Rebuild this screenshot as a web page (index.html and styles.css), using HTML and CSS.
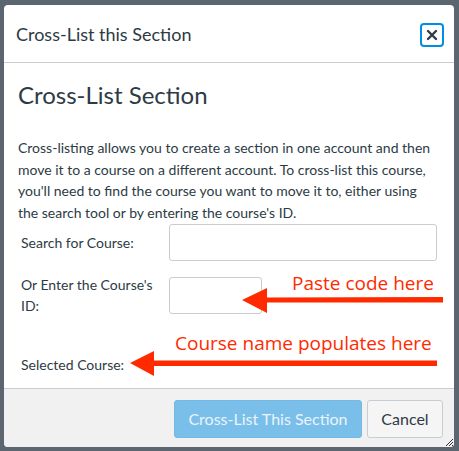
FILE: index.html
```html
<!DOCTYPE html>
<html lang="en">
<head>
  <meta charset="UTF-8">
  <meta name="viewport" content="width=device-width, initial-scale=1.0">
  <title>Cross-List this Section</title>
  <link rel="stylesheet" href="styles.css">
</head>
<body>
  <div class="dialog">
    <!-- Header -->
    <div class="dialog-header">
      <span class="dialog-title">Cross-List this Section</span>
      <button class="close-btn" aria-label="Close">
        <svg width="12" height="12" viewBox="0 0 12 12"><path d="M2 2 L10 10 M10 2 L2 10" stroke="#2d3b45" stroke-width="2.4" stroke-linecap="round"/></svg>
      </button>
    </div>

    <!-- Body -->
    <div class="dialog-body">
      <h2>Cross-List Section</h2>
      <p>Cross-listing allows you to create a section in one account and then move it to a course on a different account. To cross-list this course, you'll need to find the course you want to move it to, either using the search tool or by entering the course's ID.</p>

      <div class="form-row">
        <label for="search">Search for Course:</label>
        <input type="text" id="search" class="input-wide">
      </div>
      <div class="form-row">
        <label for="courseId">Or Enter the Course's ID:</label>
        <input type="text" id="courseId" class="input-small">
      </div>
      <div class="form-row selected">
        <span class="label">Selected Course:</span>
      </div>
    </div>

    <!-- Footer -->
    <div class="dialog-footer">
      <button class="btn-primary">Cross-List This Section</button>
      <button class="btn">Cancel</button>
      <svg class="grip" width="9" height="9" viewBox="0 0 9 9"><path d="M8 1 L1 8 M8 4 L4 8 M8 7 L7 8" stroke="#333" stroke-width="1"/></svg>
    </div>

    <!-- Annotations drawn over the dialog -->
    <div class="note note-paste">Paste code here</div>
    <svg class="arrow arrow-paste" width="202" height="26" viewBox="0 0 202 26"><path d="M0 12 L25 0 L25 9.5 L201 9 L201 14.5 L25 14.5 L25 25 Z" fill="#ff2a00"/></svg>
    <div class="note note-course">Course name populates here</div>
    <svg class="arrow arrow-course" width="308" height="26" viewBox="0 0 308 26"><path d="M0 12 L24 0 L24 9.5 L307 9.5 L307 15 L24 15 L24 25 Z" fill="#ff2a00"/></svg>
  </div>
</body>
</html>
```

FILE: styles.css
```css
body {
  margin: 0;
  padding: 5px 5px 4px 4px;
  background: #5b6670;
  font-family: Lato, "Open Sans", sans-serif;
  color: #2d3b45;
}
.dialog {
  position: relative;
  width: 450px;
  background: #fff;
  border-radius: 4px;
  overflow: hidden;
}
.dialog-header {
  height: 57px;
  display: flex;
  align-items: center;
  justify-content: space-between;
  padding: 0 10px 0 12px;
  border-bottom: 1px solid #c7cdd1;
}
.dialog-title {
  font-size: 18px;
}
.close-btn {
  width: 24px;
  height: 24px;
  margin-top: 2px;
  padding: 0;
  display: flex;
  align-items: center;
  justify-content: center;
  background: #fff;
  border: 2px solid #008ee2;
  border-radius: 4px;
}
.dialog-body {
  padding: 17px 14px 12px 14px;
}
h2 {
  margin: 0 0 27px;
  font-size: 24px;
  font-weight: 400;
  line-height: 30px;
}
p {
  margin: 0;
  font-size: 14px;
  line-height: 21.7px;
}
.form-row {
  display: flex;
  align-items: center;
  padding-left: 3px;
  margin-bottom: 13px;
}
.form-row label, .form-row .label {
  width: 148px;
  font-size: 14px;
  line-height: 21.5px;
}
.form-row .label {
  width: auto;
}
input {
  height: 37px;
  box-sizing: border-box;
  border: 1px solid #c7cdd1;
  border-radius: 3px;
  font-family: inherit;
}
.input-wide {
  width: 268px;
}
.input-small {
  width: 93px;
}
.form-row.selected {
  margin: 37px 0 0;
  height: 22px;
}
.dialog-footer {
  position: relative;
  height: 58px;
  display: flex;
  align-items: center;
  justify-content: flex-end;
  gap: 5px;
  padding-right: 11px;
  background: #f1f1f1;
  border-top: 1px solid #c7cdd1;
}
button {
  font-family: inherit;
  cursor: pointer;
}
.btn-primary, .btn {
  height: 38px;
  margin-top: 2px;
  font-size: 16px;
  border-radius: 3px;
}
.btn-primary {
  width: 188px;
  background: #7abfe9;
  color: #e9f4fb;
  border: 1px solid #74b9e4;
}
.btn {
  width: 76px;
  background: #f5f5f5;
  color: #2d3b45;
  border: 1px solid #c7cdd1;
}
.grip {
  position: absolute;
  right: 0;
  bottom: 0;
}
.note {
  position: absolute;
  color: #ff2a00;
  font-family: "Open Sans", sans-serif;
  font-size: 19px;
  line-height: 24px;
  white-space: nowrap;
}
.note-paste {
  left: 288px;
  top: 266px;
}
.note-course {
  left: 171px;
  top: 326px;
}
.arrow {
  position: absolute;
}
.arrow-paste {
  left: 238px;
  top: 283px;
}
.arrow-course {
  left: 126px;
  top: 346px;
}
```
